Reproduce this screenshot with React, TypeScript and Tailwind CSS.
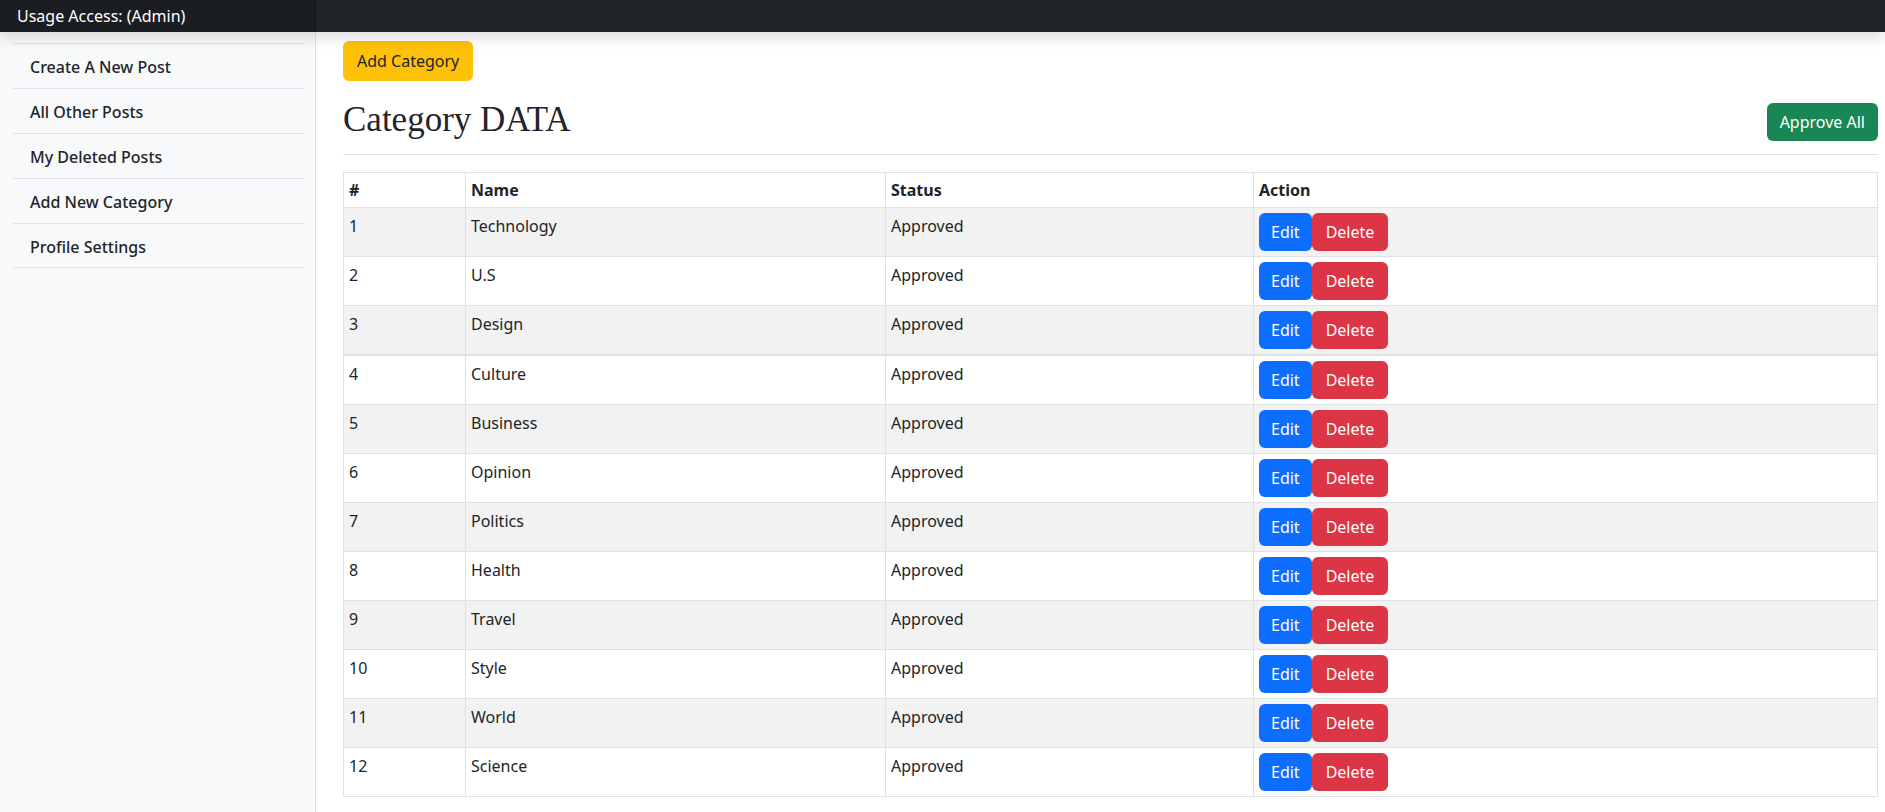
import React from "react";

const categories = [
  "Technology",
  "U.S",
  "Design",
  "Culture",
  "Business",
  "Opinion",
  "Politics",
  "Health",
  "Travel",
  "Style",
  "World",
  "Science",
];

const menu = [
  "Create A New Post",
  "All Other Posts",
  "My Deleted Posts",
  "Add New Category",
  "Profile Settings",
];

export default function App() {
  return (
    <div className="min-h-screen flex flex-col bg-white text-[#212529] font-['Noto_Sans','Open_Sans',sans-serif] text-[16px]">
      {/* top bar */}
      <header className="relative z-10 flex h-[32px] shadow-[0_6px_14px_rgba(0,0,0,0.13)]">
        <div className="w-[316px] bg-[#1b1e21] border-r border-[#16181b] flex items-center pl-[17px] text-white leading-6">
          Usage Access: (Admin)
        </div>
        <div className="flex-1 bg-[#212529]" />
      </header>

      <div className="flex flex-1">
        {/* sidebar */}
        <aside className="w-[316px] shrink-0 bg-[#f8f9fa] border-r border-[#dee2e6] px-[13px] pt-[11px] min-h-[780px]">
          <ul className="w-[292px]">
            {menu.map((item) => (
              <li
                key={item}
                className="h-[45px] flex items-center pl-[17px] pt-[2px] border-t border-[#dee2e6] last:border-b font-medium leading-6"
              >
                {item}
              </li>
            ))}
          </ul>
        </aside>

        {/* main content */}
        <main className="flex-1 pl-[27px] pr-[7px] pt-[9px]">
          <button
            type="button"
            className="h-[40px] px-[14px] rounded-[6px] bg-[#ffc107] text-[#212529] leading-6"
          >
            Add Category
          </button>

          <div className="flex justify-between items-start mt-[7px]">
            <h2 className="mt-[11px] text-[35px] leading-[42px] font-['Liberation_Serif',serif] font-normal">
              Category DATA
            </h2>
            <button
              type="button"
              className="mt-[15px] h-[38px] px-[13px] rounded-[6px] bg-[#198754] text-white leading-6"
            >
              Approve All
            </button>
          </div>

          <hr className="mt-[13px] border-t border-[#dee2e6]" />

          <table className="mt-[17px] w-full table-fixed border-collapse">
            <colgroup>
              <col className="w-[122px]" />
              <col className="w-[420px]" />
              <col className="w-[368px]" />
              <col />
            </colgroup>
            <thead>
              <tr>
                <th className="border border-[#dee2e6] px-[5px] py-[5px] text-left font-bold leading-6">#</th>
                <th className="border border-[#dee2e6] px-[5px] py-[5px] text-left font-bold leading-6">Name</th>
                <th className="border border-[#dee2e6] px-[5px] py-[5px] text-left font-bold leading-6">Status</th>
                <th className="border border-[#dee2e6] px-[5px] py-[5px] text-left font-bold leading-6">Action</th>
              </tr>
            </thead>
            <tbody>
              {categories.map((name, i) => (
                <tr
                  key={name}
                  className={`${i % 2 === 0 ? "bg-[#f2f2f2]" : "bg-white"} ${
                    i === 2 ? "border-b-2 border-[#dee2e6]" : ""
                  }`}
                >
                  <td className="border border-[#dee2e6] px-[5px] py-[6px] align-top leading-6">{i + 1}</td>
                  <td className="border border-[#dee2e6] px-[5px] py-[6px] align-top leading-6">{name}</td>
                  <td className="border border-[#dee2e6] px-[5px] py-[6px] align-top leading-6">Approved</td>
                  <td className="border border-[#dee2e6] px-[5px] py-[5px] align-top">
                    <div className="flex">
                      <button
                        type="button"
                        className="h-[38px] px-[12px] rounded-[6px] bg-[#0d6efd] text-white leading-6"
                      >
                        Edit
                      </button>
                      <button
                        type="button"
                        className="h-[38px] px-[14px] rounded-[6px] bg-[#dc3545] text-white leading-6"
                      >
                        Delete
                      </button>
                    </div>
                  </td>
                </tr>
              ))}
            </tbody>
          </table>
        </main>
      </div>
    </div>
  );
}
